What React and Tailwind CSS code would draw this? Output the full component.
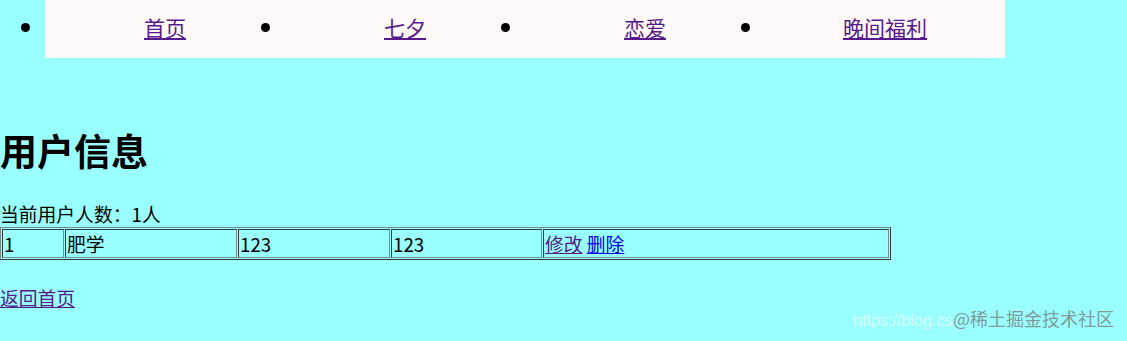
import React from 'react'

const nav = ['首页', '七夕', '恋爱', '晚间福利']
const users = [{ id: 1, name: '肥学', pwd: '123', tel: '123' }]

export default function App(){
  return (
    <div className="relative min-h-[341px] bg-[#99ffff] text-black font-['Noto_Sans_CJK_SC','Liberation_Sans',sans-serif]">
      <ul className="m-0 flex h-[58px] list-disc pl-[45px] text-[21px]">
        {nav.map(n => (
          <li key={n} className="list-item h-[58px] w-[240px] bg-[#fff8f8] pb-[6px] text-center leading-[52px] marker:text-[22px]">
            <a href="#" className="text-[#551a8b] underline">{n}</a>
          </li>
        ))}
      </ul>

      <h1 className="m-0 mt-[70px] text-[37px] font-bold leading-[44px]">用户信息</h1>
      <p className="m-0 mt-[30px] text-[18.8px] leading-[24px]">当前用户人数：{users.length}人</p>

      <table className="mt-[1px] w-[891px] border-separate border-spacing-[1px] border-[1.5px] [border-style:outset] border-[#6f8f8f] text-[18.8px] leading-[27px]">
        <tbody>
          {users.map(u => (
            <tr key={u.id}>
              <td className="w-[62px] border border-[#6f8f8f] [border-style:inset] p-0 px-[1px]">{u.id}</td>
              <td className="w-[172px] border border-[#6f8f8f] [border-style:inset] p-0 px-[1px]">{u.name}</td>
              <td className="w-[152px] border border-[#6f8f8f] [border-style:inset] p-0 px-[1px]">{u.pwd}</td>
              <td className="w-[151px] border border-[#6f8f8f] [border-style:inset] p-0 px-[1px]">{u.tel}</td>
              <td className="border border-[#6f8f8f] [border-style:inset] p-0 px-[1px]">
                <a href="#" className="text-[#551a8b] underline">修改</a>{' '}
                <a href="#" className="text-[#0000ee] underline">删除</a>
              </td>
            </tr>
          ))}
        </tbody>
      </table>

      <p className="m-0 mt-[26px] text-[18.8px] leading-[24px]">
        <a href="#" className="text-[#551a8b] underline">返回首页</a>
      </p>

      <div className="absolute right-[13px] bottom-[10px] flex items-baseline gap-[1px] leading-[20px]">
        <span className="text-[16px] text-white/60 font-['Liberation_Sans',sans-serif]">https://blog.cs</span>
        <span className="text-[18px] text-[#7f9b9b]">@稀土掘金技术社区</span>
      </div>
    </div>
  )
}
